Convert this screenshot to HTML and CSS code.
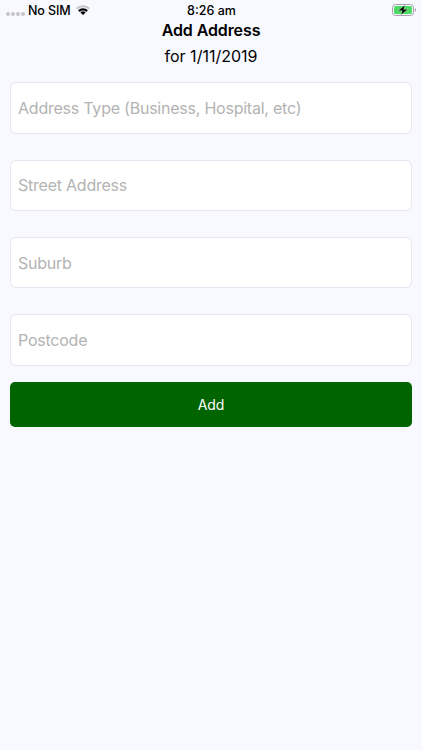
FILE: index.html
```
<!DOCTYPE html>
<html lang="en">
<head>
  <meta charset="UTF-8">
  <meta name="viewport" content="width=device-width, initial-scale=1.0">
  <title>Add Address</title>
  <link rel="stylesheet" href="styles.css">
</head>
<body>
  <div class="status-bar">
    <div class="carrier">
      <span class="signal"><i></i><i></i><i></i><i></i></span>
      <span class="carrier-name">No SIM</span>
      <svg class="wifi" viewBox="0 0 14 10">
        <path d="M0 3.1A9.8 9.8 0 0 1 14 3.1L12.6 4.6A7.8 7.8 0 0 0 1.4 4.6Z" fill="#c2c2c7"/>
        <path d="M2.1 5.3A6.8 6.8 0 0 1 11.9 5.3L10.3 7A4.6 4.6 0 0 0 3.7 7Z"/>
        <path d="M4.4 7.6A3.6 3.6 0 0 1 9.6 7.6L7 10Z"/>
      </svg>
    </div>
    <span class="time">8:26 am</span>
    <div class="battery">
      <svg class="battery-icon" viewBox="0 0 25 12">
        <rect x="0.5" y="0.5" width="21" height="11" rx="3" fill="none" stroke="#a2a2a8"/>
        <rect x="2" y="2" width="18" height="8" rx="1.6" fill="#4cd964"/>
        <path d="M22.8 4A2.2 2.2 0 0 1 22.8 8Z" fill="#a2a2a8"/>
        <path d="M13 1L6 6.7H10.2L8.8 11L16 5.3H11.8Z" fill="#000" stroke="#c9f4d0" stroke-width="0.4"/>
      </svg>
    </div>
  </div>

  <header>
    <h1>Add Address</h1>
    <p>for 1/11/2019</p>
  </header>

  <form class="address-form">
    <input type="text" placeholder="Address Type (Business, Hospital, etc)">
    <input type="text" placeholder="Street Address">
    <input type="text" placeholder="Suburb">
    <input type="text" placeholder="Postcode">
    <button type="button" class="button">Add</button>
  </form>
</body>
</html>
```
FILE: styles.css
```
* {
  margin: 0;
  padding: 0;
  box-sizing: border-box;
}

body {
  font-family: Inter, 'Liberation Sans', sans-serif;
  background-color: #f8f8ff;
  color: #000;
  min-height: 100vh;
}

/* Status bar */
.status-bar {
  display: grid;
  grid-template-columns: 1fr auto 1fr;
  align-items: center;
  height: 20px;
  padding: 0 5px 0 6px;
  font-size: 12.5px;
  font-weight: 500;
}

.carrier {
  display: flex;
  align-items: center;
}

.carrier-name {
  letter-spacing: -0.1px;
}

.signal {
  display: flex;
  gap: 1px;
  margin: 8px 3px 0 0;
}

.signal i {
  width: 4px;
  height: 4px;
  border-radius: 50%;
  background-color: #c4c4ca;
}

.wifi {
  width: 14px;
  height: 10px;
  margin-left: 5px;
}

.battery {
  display: flex;
  justify-content: flex-end;
}

.battery-icon {
  width: 25px;
  height: 12px;
}

/* Page title */
header {
  text-align: center;
}

h1 {
  font-size: 16px;
  font-weight: 600;
  line-height: 20px;
  letter-spacing: -0.1px;
}

header p {
  font-size: 16px;
  line-height: 20px;
  margin-top: 6px;
}

/* Form */
.address-form {
  display: flex;
  flex-direction: column;
  gap: 26px;
  padding: 16.2px 10px 0;
}

.address-form input {
  width: 100%;
  height: 51.4px;
  padding: 0 7px;
  border: 1px solid #e8e6f0;
  border-radius: 6px;
  background-color: #fff;
  font-family: inherit;
  font-size: 16px;
  letter-spacing: -0.23px;
}

.address-form input::placeholder {
  color: #b3b3b3;
}

.button {
  height: 45px;
  margin-top: -10px;
  border: none;
  border-radius: 5px;
  background-color: #006400;
  color: #fff;
  font-family: inherit;
  font-size: 14px;
  letter-spacing: -0.1px;
}
```
